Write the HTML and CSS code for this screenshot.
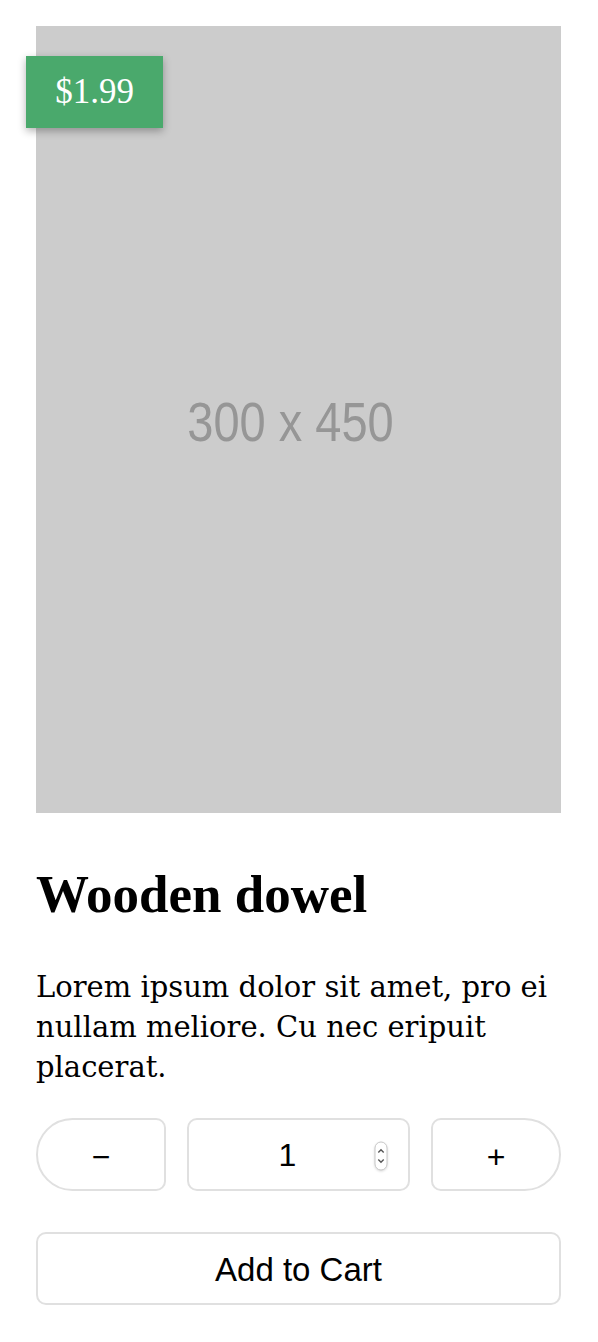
FILE: index.html
```html
<!DOCTYPE html>
<html lang="en">

<head>
    <meta charset="UTF-8">
    <meta name="viewport" content="width=device-width, initial-scale=1.0">
    <title>Wooden dowel</title>
    <link rel="stylesheet" href="styles.css">
</head>

<body>
    <div class="product">
        <div class="photo">
            <span class="photo_size">300 x 450</span>
            <span class="price">$1.99</span>
        </div>

        <h1 class="title">Wooden dowel</h1>
        <p class="desc">Lorem ipsum dolor sit amet, pro ei nullam meliore. Cu nec eripuit placerat.</p>

        <div class="qty">
            <button class="qty_btn minus">&minus;</button>
            <div class="qty_field">
                <span class="qty_num">1</span>
                <svg class="spinner" width="14" height="30" viewBox="0 0 14 30">
                    <rect x="1" y="1" width="12" height="28" rx="6" fill="#fff" stroke="#c8c8c8" />
                    <path d="M4.3 11.5 L7 8.8 L9.7 11.5" fill="none" stroke="#555" stroke-width="1.4" />
                    <path d="M4.3 18.5 L7 21.2 L9.7 18.5" fill="none" stroke="#555" stroke-width="1.4" />
                </svg>
            </div>
            <button class="qty_btn plus">+</button>
        </div>

        <button class="add">Add to Cart</button>
    </div>
</body>

</html>
```

FILE: styles.css
```css
* {
    margin: 0;
    padding: 0;
    box-sizing: border-box;
}

body {
    background-color: #fff;
    font-family: "DejaVu Serif", serif;
    color: #000;
}

.product {
    padding: 26px 37px 0 36px;
}

.photo {
    position: relative;
    height: 787px;
    background-color: #cccccc;
    display: flex;
    align-items: center;
    justify-content: center;
    padding-right: 16px;
}

.photo_size {
    font-family: "Liberation Sans", Arial, sans-serif;
    font-size: 47px;
    color: #969696;
    transform: scaleY(1.2);
    margin-top: 4px;
}

.price {
    position: absolute;
    left: -10px;
    top: 30px;
    width: 137px;
    height: 72px;
    background-color: #4aa96c;
    color: #fff;
    font-family: "Liberation Serif", serif;
    font-size: 35px;
    display: flex;
    align-items: center;
    justify-content: center;
    box-shadow: 0 3px 8px rgba(0, 0, 0, 0.3);
}

.title {
    margin-top: 51px;
    font-family: "Liberation Serif", serif;
    font-weight: bold;
    font-size: 53px;
    line-height: 60px;
}

.desc {
    margin-top: 43px;
    font-size: 29px;
    line-height: 40px;
}

.qty {
    margin-top: 31px;
    display: grid;
    grid-template-columns: 130px 1fr 130px;
    gap: 21px;
    height: 73px;
}

.qty_btn,
.qty_field,
.add {
    border: 2px solid #e0e0e0;
    background-color: #fff;
    color: #000;
    font-family: "Liberation Sans", Arial, sans-serif;
    font-size: 32px;
}

.qty_btn {
    padding-top: 5px;
}

.minus {
    border-radius: 37px 10px 10px 37px;
}

.plus {
    border-radius: 10px 37px 37px 10px;
}

.qty_field {
    border-radius: 10px;
    display: flex;
    align-items: center;
    padding-right: 20px;
}

.qty_num {
    flex: 1;
    text-align: center;
    padding-left: 12px;
    padding-top: 2px;
}

.spinner {
    margin-top: 2px;
    filter: drop-shadow(0 1px 1px rgba(0, 0, 0, 0.15));
}

.add {
    display: block;
    width: 100%;
    height: 73px;
    margin-top: 41px;
    border-radius: 10px;
    font-size: 33px;
    padding-top: 2px;
}
```
